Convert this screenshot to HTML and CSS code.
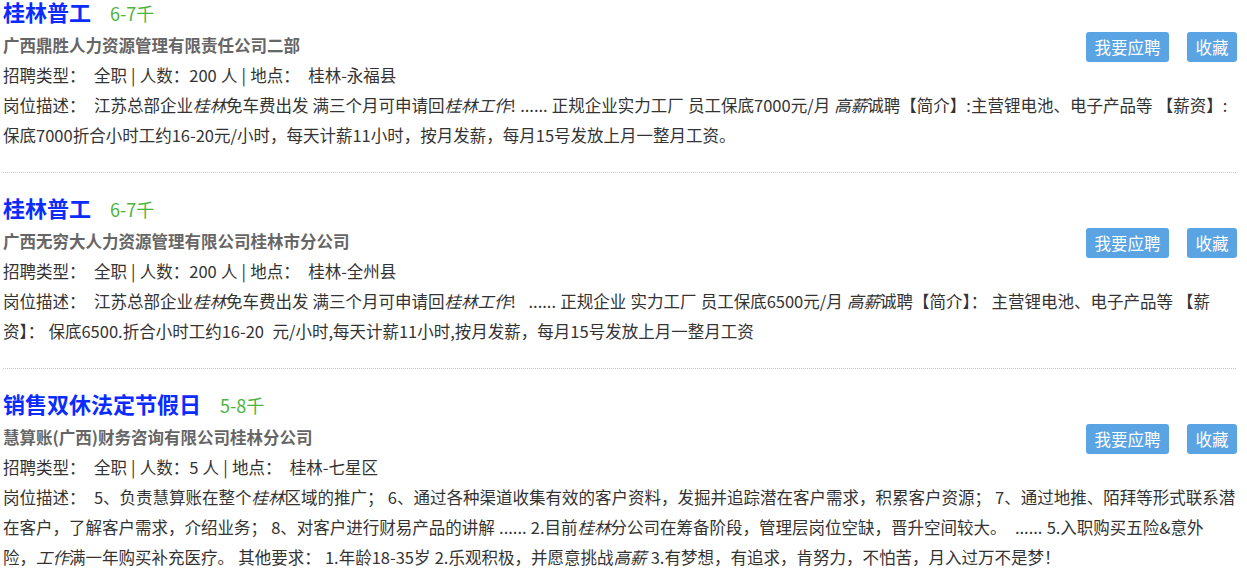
FILE: index.html
```html
<!DOCTYPE html>
<html>
<head>
  <meta charset="utf-8">
  <title>桂林招聘</title>
  <link rel="stylesheet" href="styles.css">
</head>
<body>
  <div class="lista">
    <div class="puesto">
      <div class="titulo">
        <a href="#">桂林普工</a>
        <span class="sueldo">6-7千</span>
      </div>
      <div class="empresa">
        <span>广西鼎胜人力资源管理有限责任公司二部</span>
        <div class="botones">
          <a class="boton" href="#">我要应聘</a>
          <a class="boton" href="#">收藏</a>
        </div>
      </div>
      <p class="info">招聘类型：&nbsp; 全职 | 人数：200 人 | 地点：&nbsp; 桂林-永福县</p>
      <p class="desc">岗位描述：&nbsp; 江苏总部企业<em>桂林</em>免车费出发 满三个月可申请回<em>桂林工作</em>! ...... 正规企业实力工厂 员工保底7000元/月 <em>高薪</em>诚聘【简介】:主营锂电池、电子产品等 【薪资】: 保底7000折合小时工约16-20元/小时，每天计薪11小时，按月发薪，每月15号发放上月一整月工资。</p>
    </div>

    <div class="puesto">
      <div class="titulo">
        <a href="#">桂林普工</a>
        <span class="sueldo">6-7千</span>
      </div>
      <div class="empresa">
        <span>广西无穷大人力资源管理有限公司桂林市分公司</span>
        <div class="botones">
          <a class="boton" href="#">我要应聘</a>
          <a class="boton" href="#">收藏</a>
        </div>
      </div>
      <p class="info">招聘类型：&nbsp; 全职 | 人数：200 人 | 地点：&nbsp; 桂林-全州县</p>
      <p class="desc">岗位描述：&nbsp; 江苏总部企业<em>桂林</em>免车费出发 满三个月可申请回<em>桂林工作</em>! &nbsp; ...... 正规企业 实力工厂 员工保底6500元/月 <em>高薪</em>诚聘【简介】： 主营锂电池、电子产品等 【薪资】： 保底6500.折合小时工约16-20 &nbsp;元/小时,每天计薪11小时,按月发薪，每月15号发放上月一整月工资</p>
    </div>

    <div class="puesto">
      <div class="titulo">
        <a href="#">销售双休法定节假日</a>
        <span class="sueldo">5-8千</span>
      </div>
      <div class="empresa">
        <span>慧算账(广西)财务咨询有限公司桂林分公司</span>
        <div class="botones">
          <a class="boton" href="#">我要应聘</a>
          <a class="boton" href="#">收藏</a>
        </div>
      </div>
      <p class="info">招聘类型：&nbsp; 全职 | 人数：5 人 | 地点：&nbsp; 桂林-七星区</p>
      <p class="desc">岗位描述：&nbsp; 5、负责慧算账在整个<em>桂林</em>区域的推广； 6、通过各种渠道收集有效的客户资料，发掘并追踪潜在客户需求，积累客户资源； 7、通过地推、陌拜等形式联系潜在客户，了解客户需求，介绍业务； 8、对客户进行财易产品的讲解 ...... 2.目前<em>桂林</em>分公司在筹备阶段，管理层岗位空缺，晋升空间较大。 &nbsp;...... 5.入职购买五险&amp;意外险，<em>工作</em>满一年购买补充医疗。 其他要求： 1.年龄18-35岁 2.乐观积极，并愿意挑战<em>高薪</em> 3.有梦想，有追求，肯努力，不怕苦，月入过万不是梦！</p>
    </div>
  </div>
</body>
</html>
```

FILE: styles.css
```css
body {
  margin: 0;
  font-family: "Noto Sans CJK SC", "Noto Sans", sans-serif;
  font-size: 16.5px;
  color: #333;
  background-color: #fff;
}

.lista {
  padding: 0 11px 0 3px;
}

.puesto {
  padding: 21px 0 22px;
  border-bottom: 1px dotted #c8c8c8;
}

.puesto:first-child {
  padding-top: 0;
  margin-top: -2px;
}

.titulo {
  height: 30px;
  line-height: 26px;
  display: flex;
  align-items: baseline;
  gap: 19px;
}

.titulo a {
  font-size: 22px;
  font-weight: bold;
  color: #0a2cff;
  text-decoration: none;
}

.sueldo {
  font-size: 18px;
  color: #4cb43c;
}

.empresa {
  margin-top: 2px;
  height: 30px;
  line-height: 30px;
  display: flex;
  justify-content: space-between;
  font-weight: bold;
  color: #666;
}

.botones {
  display: flex;
  gap: 18px;
  margin-top: 2px;
  margin-right: -1px;
}

.boton {
  display: block;
  height: 30px;
  line-height: 30px;
  padding: 0 8.5px;
  border-radius: 3px;
  background-color: #5ba4e4;
  color: white;
  font-size: 16.5px;
  font-weight: normal;
  text-decoration: none;
}

.info,
.desc {
  margin: 0;
  line-height: 30px;
  word-spacing: 0.5px;
}

.desc em {
  font-style: italic;
}
```
